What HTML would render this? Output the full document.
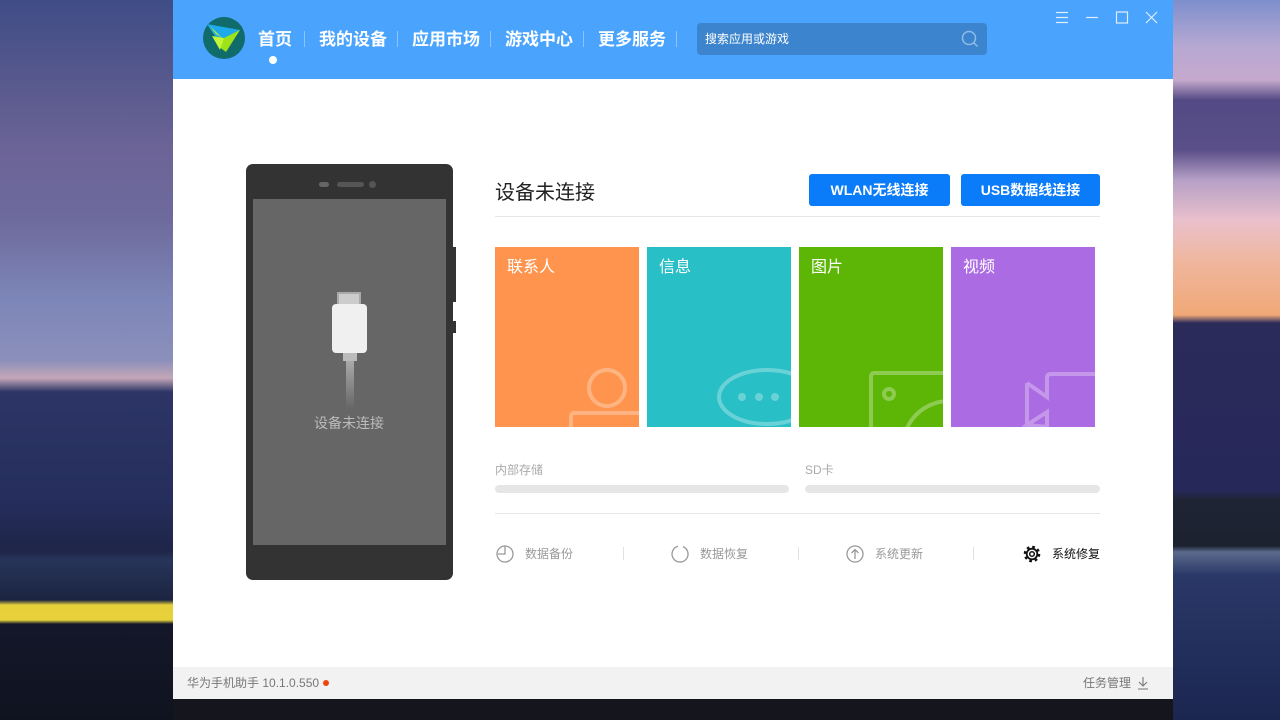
<!DOCTYPE html>
<html><head><meta charset="utf-8"><style>
*{margin:0;padding:0;box-sizing:border-box}
body{width:1280px;height:720px;overflow:hidden;position:relative;font-family:"Liberation Sans","Noto Sans CJK SC",sans-serif;background:#15151d}
.bgl{position:absolute;left:0;top:0;width:173px;height:720px;background:linear-gradient(to bottom,#3f4d86 0,#5a5a8e 90px,#6c6497 150px,#6e6a9d 220px,#7d86b8 300px,#8b8fbb 360px,#c4a7b8 378px,#2c3566 392px,#252e5c 500px,#1f2548 551px,#27355a 560px,#1c2440 600px,#e6cf3a 605px,#e8d23c 620px,#14172a 624px,#10131f 720px)}
.bgr{position:absolute;left:1173px;top:0;width:107px;height:720px;background:linear-gradient(to bottom,#7d8fcc 0,#b6a8d2 46px,#c6a9cd 80px,#534a85 100px,#5a4f88 150px,#b6a0c6 180px,#e9c0cc 220px,#efb79f 260px,#f0a877 315px,#2b2b5a 323px,#26285a 490px,#1f2434 500px,#1c2230 546px,#5b6a8c 552px,#2a3868 575px,#1b2650 720px)}
.win{position:absolute;left:173px;top:0;width:1000px;height:699px;background:#fff}
.hdr{position:absolute;left:0;top:0;width:1000px;height:79px;background:#4aa3fd}
.nav{position:absolute;top:29px;color:#fff;font-size:17px;font-weight:bold;line-height:22px}
.sep{position:absolute;top:31px;width:1px;height:16px;background:#8cc4fe}
.search{position:absolute;left:524px;top:23px;width:290px;height:32px;background:#3c84cd;border-radius:4px;color:#fff;font-size:12px;line-height:32px;padding-left:8px}
.ftr{position:absolute;left:0;top:667px;width:1000px;height:32px;background:#f2f2f2;font-size:12px;color:#777;line-height:32px}
.tile{position:absolute;top:247px;width:144px;height:180px;overflow:hidden;color:#fff;font-size:16px}
.tile span{position:absolute;left:12px;top:6px}
.tile svg{position:absolute;left:0;top:0}
.btn{position:absolute;top:174px;height:32px;background:#0a7cfa;color:#fff;font-size:14px;font-weight:bold;line-height:32px;text-align:center;border-radius:3px}
.lbl{position:absolute;font-size:12px;color:#aaa}
.bar{position:absolute;top:485px;height:8px;background:#e6e6e6;border-radius:4px}
.act{position:absolute;top:545px;font-size:12px;color:#999;line-height:18px}
</style></head><body>
<div class="bgl"></div><div class="bgr"></div>
<div class="win">
 <div class="hdr">
  <svg style="position:absolute;left:29px;top:16px" width="44" height="44" viewBox="0 0 44 44">
   <circle cx="22" cy="22" r="21" fill="#0f6c6a"/>
   <path d="M5 8 L38 14 L22 34 Z" fill="#1ea9e8"/>
   <path d="M8 10 L20 22 L14 18 Z" fill="#b8f22a"/>
   <path d="M38 14 L24 36 L16 30 L22 22 Z" fill="#9ee21a"/>
   <path d="M10 20 L22 22 L18 34 Z" fill="#c3f53a"/>
  </svg>
  <div class="nav" style="left:85px">首页</div>
  <div style="position:absolute;left:96px;top:56px;width:8px;height:8px;border-radius:50%;background:#fff"></div>
  <div class="sep" style="left:131px"></div>
  <div class="nav" style="left:146px">我的设备</div>
  <div class="sep" style="left:224px"></div>
  <div class="nav" style="left:239px">应用市场</div>
  <div class="sep" style="left:317px"></div>
  <div class="nav" style="left:332px">游戏中心</div>
  <div class="sep" style="left:410px"></div>
  <div class="nav" style="left:425px">更多服务</div>
  <div class="sep" style="left:503px"></div>
  <div class="search">搜索应用或游戏
   <svg style="position:absolute;right:8px;top:7px" width="18" height="18" viewBox="0 0 18 18"><circle cx="8" cy="8" r="6.5" fill="none" stroke="#8fbce8" stroke-width="1.5"/><path d="M12.5 12.5 L16.5 16.5" stroke="#8fbce8" stroke-width="1.5"/></svg>
  </div>
  <svg style="position:absolute;left:880px;top:10px" width="115" height="16" viewBox="0 0 115 16">
   <g stroke="#dfeeff" stroke-width="1.2" fill="none">
    <path d="M3 2.5h12M3 7.5h12M3 12.5h12"/>
    <path d="M33 7.5h12"/>
    <rect x="63.5" y="2" width="11" height="11"/>
    <path d="M93 2 L104 13 M104 2 L93 13"/>
   </g>
  </svg>
 </div>

 <div style="position:absolute;left:73px;top:164px;width:207px;height:416px;background:#333;border-radius:7px"></div>
 <div style="position:absolute;left:280px;top:247px;width:3px;height:55px;background:#333"></div>
 <div style="position:absolute;left:280px;top:321px;width:3px;height:12px;background:#333"></div>
 <div style="position:absolute;left:146px;top:182px;width:10px;height:5px;border-radius:3px;background:#666"></div>
 <div style="position:absolute;left:164px;top:182px;width:27px;height:5px;border-radius:3px;background:#555"></div>
 <div style="position:absolute;left:196px;top:181px;width:7px;height:7px;border-radius:50%;background:#555"></div>
 <div style="position:absolute;left:80px;top:199px;width:193px;height:346px;background:#666"></div>
 <div style="position:absolute;left:164px;top:292px;width:24px;height:14px;background:#ccc;border:2px solid #aaa"></div>
 <div style="position:absolute;left:159px;top:304px;width:35px;height:49px;background:#f0f0f0;border-radius:4px"></div>
 <div style="position:absolute;left:170px;top:353px;width:14px;height:8px;background:#bbb"></div>
 <div style="position:absolute;left:173px;top:361px;width:8px;height:48px;background:linear-gradient(#aaa,#666)"></div>
 <div style="position:absolute;left:141px;top:413px;font-size:14px;color:#bbb">设备未连接</div>

 <div style="position:absolute;left:322px;top:176px;font-size:20px;color:#222">设备未连接</div>
 <div class="btn" style="left:636px;width:141px">WLAN无线连接</div>
 <div class="btn" style="left:788px;width:139px">USB数据线连接</div>
 <div style="position:absolute;left:322px;top:216px;width:605px;height:1px;background:#e6e6e6"></div>

 <div class="tile" style="left:322px;background:#fe944d"><span>联系人</span>
  <svg width="144" height="180"><g fill="none" stroke="rgba(255,255,255,.3)" stroke-width="4"><circle cx="112" cy="141" r="18"/><rect x="76" y="166" width="80" height="30" rx="3"/></g></svg></div>
 <div class="tile" style="left:474px;background:#29bfc6"><span>信息</span>
  <svg width="144" height="180"><g fill="none" stroke="rgba(255,255,255,.3)" stroke-width="4"><ellipse cx="120" cy="150" rx="48" ry="27"/></g><g fill="rgba(255,255,255,.3)"><circle cx="95" cy="150" r="4"/><circle cx="112" cy="150" r="4"/><circle cx="128" cy="150" r="4"/></g></svg></div>
 <div class="tile" style="left:626px;background:#5db606"><span>图片</span>
  <svg width="144" height="180"><g fill="none" stroke="rgba(255,255,255,.3)" stroke-width="4"><rect x="72" y="126" width="90" height="70" rx="3"/><circle cx="90" cy="147" r="5"/><circle cx="150" cy="200" r="46"/></g></svg></div>
 <div class="tile" style="left:778px;background:#ab6be3"><span>视频</span>
  <svg width="144" height="180"><g fill="none" stroke="rgba(255,255,255,.3)" stroke-width="4"><path d="M76 136 L96 150 L96 131 Q96 127 100 127 L150 127 M96 180 L96 165 L76 178 Z M76 136 L76 190"/></g></svg></div>

 <div class="lbl" style="left:322px;top:461px">内部存储</div>
 <div class="lbl" style="left:632px;top:461px">SD卡</div>
 <div class="bar" style="left:322px;width:294px"></div>
 <div class="bar" style="left:632px;width:295px"></div>
 <div style="position:absolute;left:322px;top:513px;width:605px;height:1px;background:#e6e6e6"></div>

 <svg style="position:absolute;left:322px;top:544px" width="20" height="20" viewBox="0 0 20 20"><circle cx="10" cy="10" r="8" fill="none" stroke="#999" stroke-width="1.3"/><path d="M10 2 V10 H3" fill="none" stroke="#999" stroke-width="1.3"/></svg>
 <div class="act" style="left:352px">数据备份</div>
 <div style="position:absolute;left:450px;top:547px;width:1px;height:13px;background:#e2e2e2"></div>
 <svg style="position:absolute;left:497px;top:544px" width="20" height="20" viewBox="0 0 20 20"><path d="M8 2.3 A8 8 0 1 0 13 2.6" fill="none" stroke="#999" stroke-width="1.3"/></svg>
 <div class="act" style="left:527px">数据恢复</div>
 <div style="position:absolute;left:625px;top:547px;width:1px;height:13px;background:#e2e2e2"></div>
 <svg style="position:absolute;left:672px;top:544px" width="20" height="20" viewBox="0 0 20 20"><circle cx="10" cy="10" r="8" fill="none" stroke="#999" stroke-width="1.3"/><path d="M10 15 V6 M6.5 9 L10 5.5 L13.5 9" fill="none" stroke="#999" stroke-width="1.3"/></svg>
 <div class="act" style="left:702px">系统更新</div>
 <div style="position:absolute;left:800px;top:547px;width:1px;height:13px;background:#e2e2e2"></div>
 <svg style="position:absolute;left:849px;top:544px" width="20" height="20" viewBox="0 0 20 20"><circle cx="10" cy="10" r="7" fill="none" stroke="#111" stroke-width="2.6" stroke-dasharray="2.6 2.9"/><circle cx="10" cy="10" r="5.3" fill="none" stroke="#111" stroke-width="1.8"/><circle cx="10" cy="10" r="2.3" fill="none" stroke="#111" stroke-width="1.5"/></svg>
 <div class="act" style="left:879px;color:#111">系统修复</div>

 <div class="ftr"><span style="position:absolute;left:14px">华为手机助手 10.1.0.550</span><span style="position:absolute;left:150px;top:13px;width:6px;height:6px;border-radius:50%;background:#f0440a"></span>
  <span style="position:absolute;left:910px">任务管理</span>
  <svg style="position:absolute;left:964px;top:9px" width="12" height="14" viewBox="0 0 12 14"><path d="M6 1 V10 M2 6 L6 10 L10 6 M1 13 H11" fill="none" stroke="#777" stroke-width="1.1"/></svg>
 </div>
</div>
</body></html>
